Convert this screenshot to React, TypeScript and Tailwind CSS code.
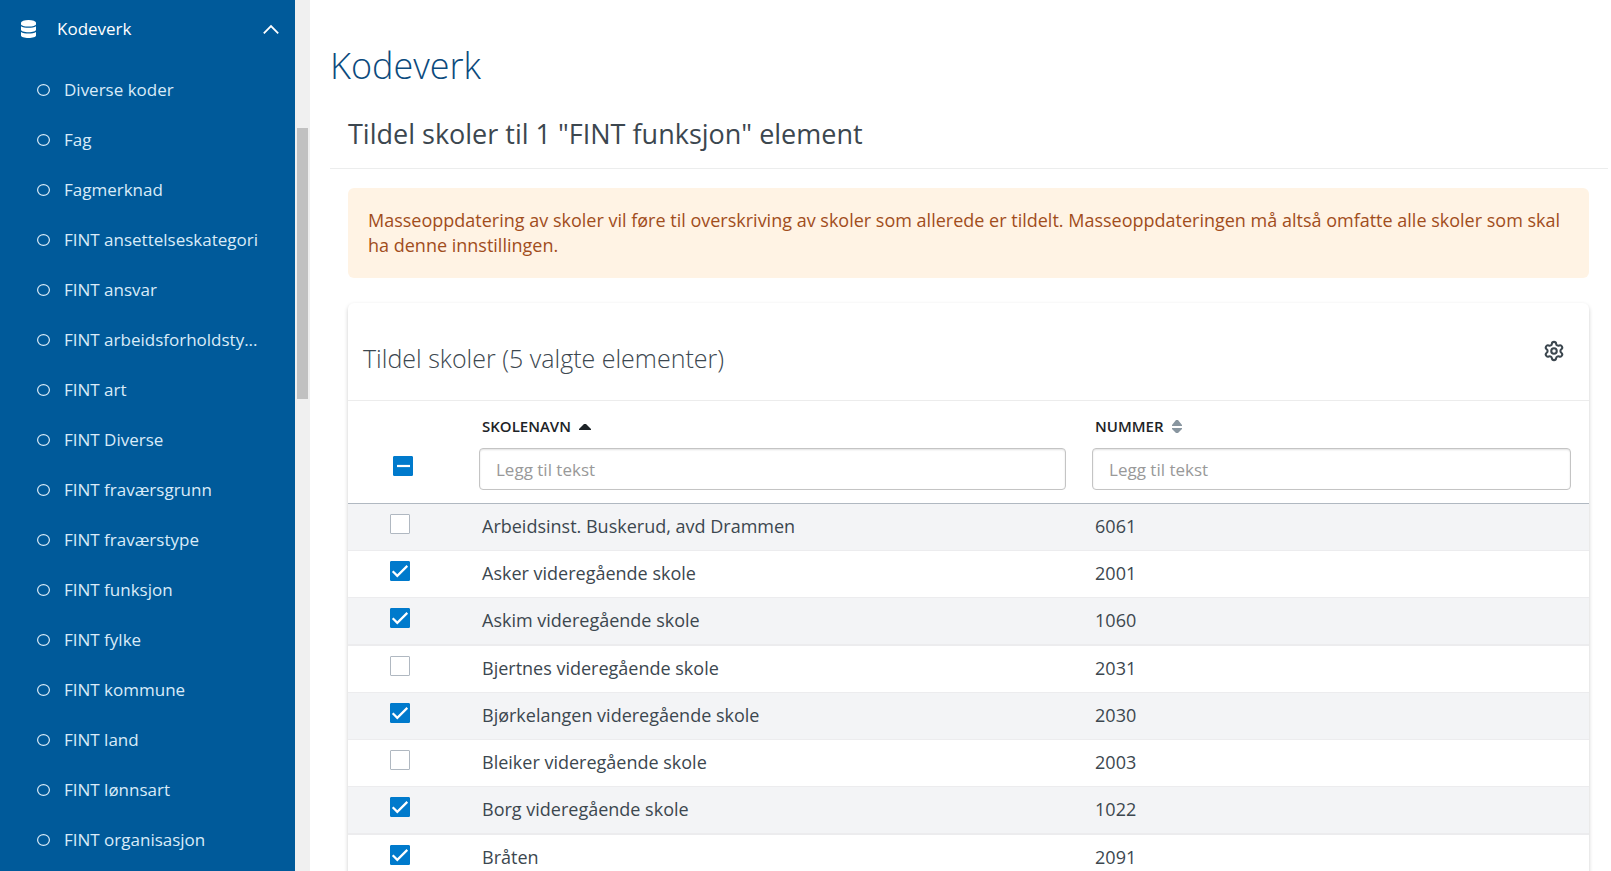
import { useState } from "react";
import { Settings } from "lucide-react";

const menuItems = [
  "Diverse koder",
  "Fag",
  "Fagmerknad",
  "FINT ansettelseskategori",
  "FINT ansvar",
  "FINT arbeidsforholdsty...",
  "FINT art",
  "FINT Diverse",
  "FINT fraværsgrunn",
  "FINT fraværstype",
  "FINT funksjon",
  "FINT fylke",
  "FINT kommune",
  "FINT land",
  "FINT lønnsart",
  "FINT organisasjon",
];

const schools = [
  { name: "Arbeidsinst. Buskerud, avd Drammen", number: "6061", selected: false },
  { name: "Asker videregående skole", number: "2001", selected: true },
  { name: "Askim videregående skole", number: "1060", selected: true },
  { name: "Bjertnes videregående skole", number: "2031", selected: false },
  { name: "Bjørkelangen videregående skole", number: "2030", selected: true },
  { name: "Bleiker videregående skole", number: "2003", selected: false },
  { name: "Borg videregående skole", number: "1022", selected: true },
  { name: "Bråten", number: "2091", selected: true },
];

function DatabaseIcon() {
  return (
    <svg viewBox="0 0 15 18" className="h-[18px] w-[15px]" fill="currentColor" aria-hidden="true">
      <ellipse cx="7.5" cy="2.8" rx="7.5" ry="2.8" />
      <path d="M0 2.8h15v1.4c0 1.4-3.4 2.3-7.5 2.3S0 5.6 0 4.2z" />
      <path d="M0 6.2c1.5 1.1 4.4 1.6 7.5 1.6s6-.5 7.5-1.6v3.6c0 1.4-3.4 2.5-7.5 2.5S0 11.2 0 9.8z" />
      <path d="M0 12c1.5 1.1 4.4 1.6 7.5 1.6s6-.5 7.5-1.6v3.5c0 1.4-3.4 2.5-7.5 2.5S0 16.9 0 15.5z" />
    </svg>
  );
}

function Sidebar() {
  return (
    <nav aria-label="Hovedmeny" className="w-[295px] shrink-0 overflow-hidden bg-[#005a9a] text-[17px]">
      <button type="button" className="flex h-[58px] w-full items-center pl-[21px] pr-4 text-white">
        <DatabaseIcon />
        <span className="ml-[21px] flex-1 text-left">Kodeverk</span>
        <svg viewBox="0 0 16 10" className="h-2.5 w-4" fill="none" stroke="currentColor" strokeWidth="1.8" aria-hidden="true">
          <path d="M.8 9.300L8 2L15.200 9.300" />
        </svg>
      </button>
      <ul className="pt-[7px]">
        {menuItems.map((item) => (
          <li key={item}>
            <a href="#" className="flex h-[50px] items-center pl-[37px] text-[#d9ebf8]">
              <svg viewBox="0 0 13 12" className="h-3 w-[13px]" fill="none" stroke="currentColor" aria-hidden="true">
                <ellipse cx="6.5" cy="6" rx="5.9" ry="5.4" strokeWidth="1.2" />
              </svg>
              <span className="ml-3.5 whitespace-nowrap">{item}</span>
            </a>
          </li>
        ))}
      </ul>
    </nav>
  );
}

type TickProps = { label: string; checked: boolean; partial?: boolean; onChange: () => void };

function Tick({ label, checked, partial = false, onChange }: TickProps) {
  return (
    <span className="grid size-5">
      <input
        type="checkbox"
        aria-label={label}
        checked={checked}
        onChange={onChange}
        className="col-start-1 row-start-1 size-5 appearance-none rounded-[1px] border border-[#b0b8c1] bg-white checked:border-[#007acc] checked:bg-[#007acc]"
      />
      {checked && (
        <svg
          viewBox="0 0 20 20"
          className="pointer-events-none col-start-1 row-start-1 size-5"
          fill="none"
          stroke="white"
          strokeWidth="2.2"
          aria-hidden="true"
        >
          {partial ? <path d="M4 10h13" /> : <path d="M2.7 10.300l4.600 4.600L17.300 4.900" />}
        </svg>
      )}
    </span>
  );
}

const filterClass =
  "block h-[42px] w-full rounded border border-[#c4c4c4] bg-white px-4 text-[17px] font-normal text-[#3c474f] shadow-[inset_0_1px_2px_rgba(0,0,0,0.12)] placeholder:text-[#999999]";

export default function App() {
  const [rows, setRows] = useState(schools);
  const selectedCount = rows.filter((row) => row.selected).length;

  const toggle = (index: number) =>
    setRows(rows.map((row, i) => (i === index ? { ...row, selected: !row.selected } : row)));
  const toggleAll = () => setRows(rows.map((row) => ({ ...row, selected: selectedCount === 0 })));

  return (
    <div className="flex h-screen overflow-hidden bg-white font-['Open_Sans',sans-serif] text-[#3c474f]">
      <Sidebar />
      <div className="w-[15px] shrink-0 bg-[#f0f0f0] px-[2px] pt-32" aria-hidden="true">
        <div className="h-[271px] w-[11px] bg-[#c1c1c1]" />
      </div>

      <main className="min-w-0 flex-1 overflow-hidden pl-5 pr-[3px] pt-[41px]">
        <h1 className="text-4xl leading-[50px] font-light text-[#0b4a7d]">Kodeverk</h1>
        <h2 className="mt-3 border-b border-[#eceded] pt-[13px] pb-4 pl-[18px] text-[27px] leading-9">
          Tildel skoler til 1 "FINT funksjon" element
        </h2>

        <div className="pt-[19px] pr-[19px] pl-[18px]">
          <p role="alert" className="rounded-md bg-[#fff3e4] px-5 pt-5 pb-5 text-lg leading-[25px] text-[#a14d1c]">
            Masseoppdatering av skoler vil føre til overskriving av skoler som allerede er tildelt.
            Masseoppdateringen må altså omfatte alle skoler som skal ha denne innstillingen.
          </p>

          <section className="mt-[25px] rounded-md shadow-[0_2px_4px_rgba(0,0,0,0.2)]">
            <div className="flex h-[98px] items-start justify-between border-b border-[#ececec] pt-[37px] pr-6 pl-[15px]">
              <h3 className="text-[25px] leading-9 font-light">Tildel skoler ({selectedCount} valgte elementer)</h3>
              <button type="button" aria-label="Innstillinger">
                <Settings size={22} strokeWidth={2.25} aria-hidden="true" />
              </button>
            </div>

            <table className="w-full table-fixed border-collapse text-left text-lg">
              <colgroup>
                <col className="w-[118px]" />
                <col className="w-[49.4%]" />
                <col />
              </colgroup>
              <thead>
                <tr className="h-[102px] border-b border-[#b0b8c1] align-top">
                  <th className="pt-[55px] pl-[45px]">
                    <Tick
                      label="Velg alle"
                      checked={selectedCount > 0}
                      partial={selectedCount < rows.length}
                      onChange={toggleAll}
                    />
                  </th>
                  <th className="px-[13px] pt-4" aria-sort="ascending">
                    <button
                      type="button"
                      className="flex h-5 items-center gap-2 pl-[3px] text-[15px] font-semibold text-[#1d2327]"
                    >
                      SKOLENAVN
                      <svg viewBox="0 0 12 6" className="h-1.5 w-3" fill="currentColor" aria-hidden="true">
                        <path d="M0 6V5L5 0h2l5 5v1z" />
                      </svg>
                    </button>
                    <div className="pt-[11px]">
                      <input aria-label="Skolenavn" placeholder="Legg til tekst" className={filterClass} />
                    </div>
                  </th>
                  <th className="pt-4 pr-[18px] pl-[13px]">
                    <button
                      type="button"
                      className="flex h-5 items-center gap-2 pl-[3px] text-[15px] font-semibold text-[#1d2327]"
                    >
                      NUMMER
                      <svg viewBox="0 0 10 14" className="h-3.5 w-2.5 text-[#8996a0]" fill="currentColor" aria-hidden="true">
                        <path d="M0 6V5L4 0h2l4 5v1zM0 8h10v1l-4 4H4L0 9z" />
                      </svg>
                    </button>
                    <div className="pt-[11px]">
                      <input aria-label="Nummer" placeholder="Legg til tekst" className={filterClass} />
                    </div>
                  </th>
                </tr>
              </thead>
              <tbody>
                {rows.map((row, index) => (
                  <tr
                    key={row.number}
                    className="border-b border-[#ececee] align-top odd:bg-[#f3f4f6] [&:nth-child(4n+3)]:border-b-2"
                  >
                    <td className="pt-2.5 pl-[42px]">
                      <Tick label={`Velg ${row.name}`} checked={row.selected} onChange={() => toggle(index)} />
                    </td>
                    <td className="pt-2.5 pb-[11px] pl-4 leading-[25px]">{row.name}</td>
                    <td className="pt-2.5 pb-[11px] pl-4 leading-[25px]">{row.number}</td>
                  </tr>
                ))}
              </tbody>
            </table>
          </section>
        </div>
      </main>
    </div>
  );
}
